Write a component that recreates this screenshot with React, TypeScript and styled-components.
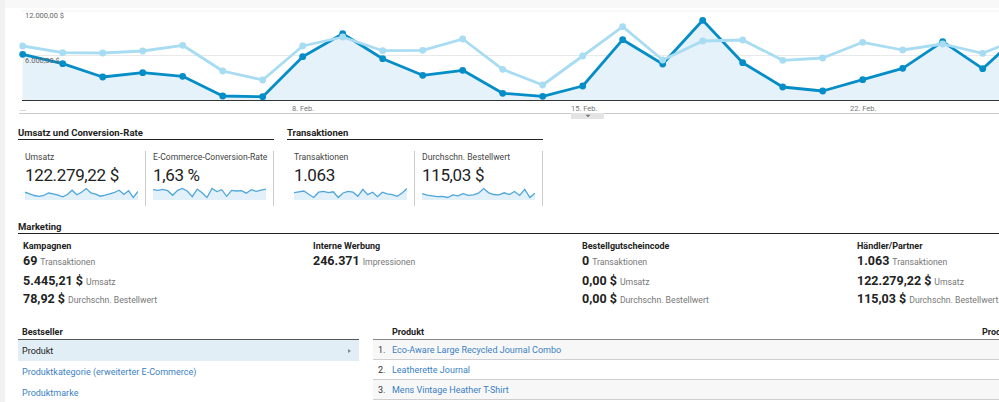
import React from "react";
import styled, { createGlobalStyle } from "styled-components";

const GlobalStyle = createGlobalStyle`
  html, body {
    margin: 0;
    padding: 0;
    background: #fff;
    overflow: hidden;
  }
  body {
    font-family: Roboto, "Noto Sans", Arial, sans-serif;
    color: #222;
  }
`;

const Page = styled.div`
  display: flex;
  width: 999px;
  height: 402px;
  overflow: hidden;
`;

const SideStrip = styled.div`
  width: 5px;
  flex: none;
  background: #f1f1f1;
`;

const Main = styled.div`
  flex: 1;
  min-width: 0;
`;

const TopBand = styled.div`
  height: 8px;
  background: #f8f8f8;
`;

const ChartSvg = styled.svg`
  display: block;
  width: 994px;
  height: 111px;
`;

const Section = styled.section<{ $top: number }>`
  padding-left: 13px;
  margin-top: ${(p) => p.$top}px;
`;

const KpiGroups = styled.div`
  display: flex;
  gap: 13px;
`;

const KpiGroup = styled.div`
  width: 256px;
`;

const GroupTitle = styled.div`
  font-size: 9.5px;
  font-weight: 700;
  line-height: 12px;
  color: #222;
  border-bottom: 1px solid #222;
`;

const Cards = styled.div`
  display: flex;
  margin-top: 11px;
`;

const Card = styled.div`
  width: 128px;
  height: 55px;
  box-sizing: border-box;
  padding: 0 0 6px 7px;
  border-right: 1px solid #ccc;
`;

const CardLabel = styled.div`
  font-size: 8.6px;
  line-height: 13px;
  color: #444;
  white-space: nowrap;
`;

const CardValue = styled.div`
  font-size: 17px;
  line-height: 23px;
  letter-spacing: -0.35px;
  color: #222;
  white-space: nowrap;
`;

const MarketingGrid = styled.div`
  display: grid;
  grid-template-columns: 290px 269px 275px 1fr;
  padding: 6px 0 0 5px;
`;

const MarketingCol = styled.div`
  display: flex;
  flex-direction: column;
`;

const MarketingTitle = styled.div`
  font-size: 9px;
  font-weight: 700;
  line-height: 12px;
  color: #222;
`;

const MarketingLine = styled.div<{ $gap: number }>`
  margin-top: ${(p) => p.$gap}px;
  height: 15px;
  line-height: 15px;
  white-space: nowrap;
`;

const BigNum = styled.span`
  font-size: 12.5px;
  font-weight: 700;
  line-height: 15px;
  color: #222;
`;

const SmallUnit = styled.span`
  font-size: 8.7px;
  line-height: 15px;
  color: #777;
  margin-left: 3px;
`;

const TablesRow = styled.div`
  display: flex;
  gap: 14px;
  margin-top: 21px;
`;

const SideTable = styled.div`
  width: 341px;
  flex: none;
`;

const TableHead = styled.div<{ $border: string; $pad: number }>`
  display: flex;
  font-size: 9px;
  font-weight: 700;
  line-height: 13px;
  color: #222;
  padding-left: ${(p) => p.$pad}px;
  border-bottom: 1px solid ${(p) => p.$border};
`;

const SideRow = styled.div<{ $active?: boolean }>`
  display: flex;
  align-items: center;
  justify-content: space-between;
  height: 21px;
  padding: 0 8px 0 4px;
  font-size: 9px;
  background: ${(p) => (p.$active ? "#e1eef6" : "transparent")};
  color: ${(p) => (p.$active ? "#222" : "#3a81c3")};
`;

const RowArrow = styled.span`
  width: 0;
  height: 0;
  border-top: 2.5px solid transparent;
  border-bottom: 2.5px solid transparent;
  border-left: 3px solid #888;
`;

const DataTable = styled.div`
  width: 720px;
  flex: none;
`;

const HeadCell = styled.div<{ $w?: number }>`
  width: ${(p) => (p.$w ? `${p.$w}px` : "auto")};
  flex: ${(p) => (p.$w ? "none" : "1")};
  white-space: nowrap;
`;

const DataRow = styled.div<{ $striped: boolean }>`
  display: flex;
  align-items: center;
  height: 19px;
  border-bottom: 1px solid #cfcfcf;
  background: ${(p) => (p.$striped ? "#f7f7f7" : "#fff")};
  font-size: 9px;
`;

const RowIndex = styled.span`
  width: 14px;
  padding-left: 5px;
  color: #333;
`;

const RowLink = styled.span`
  color: #3a81c3;
`;

const X0 = 22.7;
const STEP = 40;

const revenue = [
  54.3, 63.7, 77, 72.7, 76.3, 96, 96.7, 56.7, 33.7, 58.7, 75.3, 70.3, 93.3,
  96.3, 86, 39.7, 64, 20.3, 62.7, 87, 91, 79.7, 68.3, 41.7, 68.7, 32,
];

const conversion = [
  46, 52.7, 53, 51, 45.3, 71, 80, 46, 37, 50.7, 50.3, 39, 69.3, 85, 56, 26.7,
  60, 41, 40, 60.3, 58, 42.3, 50, 44, 53.3, 37.5,
];

const toPoints = (vals: number[]) =>
  vals.map((y, i) => `${(X0 + i * STEP).toFixed(1)},${y}`).join(" ");

function TrendChart() {
  const lastX = X0 + (revenue.length - 1) * STEP;
  const area = `M${X0},100 L${toPoints(revenue)} L${lastX},100 Z`;
  const axisLabels = [
    { x: 20, t: "..." },
    { x: 292, t: "8. Feb." },
    { x: 571, t: "15. Feb." },
    { x: 850, t: "22. Feb." },
  ];

  return (
    <ChartSvg viewBox="5 8 994 111">
      <line x1="22" y1="11" x2="999" y2="11" stroke="#f0f0f0" />
      <line x1="22" y1="55.5" x2="999" y2="55.5" stroke="#e9e9e9" />
      <path d={area} fill="#e6f2f9" />
      <polyline
        points={toPoints(revenue)}
        fill="none"
        stroke="#058dc7"
        strokeWidth="2.8"
        strokeLinejoin="round"
      />
      {revenue.map((y, i) => (
        <circle key={`r${i}`} cx={X0 + i * STEP} cy={y} r="3.4" fill="#058dc7" />
      ))}
      <polyline
        points={toPoints(conversion)}
        fill="none"
        stroke="#a8dcf2"
        strokeWidth="2.8"
        strokeLinejoin="round"
      />
      {conversion.map((y, i) => (
        <circle key={`c${i}`} cx={X0 + i * STEP} cy={y} r="3.4" fill="#a8dcf2" />
      ))}
      <line x1="22" y1="100.5" x2="999" y2="100.5" stroke="#333" />
      <text x="25" y="18" fontSize="7.5" fill="#666" fontFamily="Roboto, sans-serif">
        12.000,00 $
      </text>
      <text x="25" y="63" fontSize="7.5" fill="#666" fontFamily="Roboto, sans-serif">
        6.000,00 $
      </text>
      {axisLabels.map((l) => (
        <text
          key={l.t}
          x={l.x}
          y="110.5"
          fontSize="7.5"
          fill="#777"
          fontFamily="Roboto, sans-serif"
        >
          {l.t}
        </text>
      ))}
      <line x1="19" y1="113.5" x2="999" y2="113.5" stroke="#cccccc" />
      <rect x="571" y="113" width="33" height="6" fill="#e4e4e4" />
      <path d="M585.5,114.8 L590.5,114.8 L588,117.2 Z" fill="#777" />
    </ChartSvg>
  );
}

function Sparkline({ values }: { values: number[] }) {
  const w = 113;
  const h = 13;
  const min = Math.min(...values);
  const max = Math.max(...values);
  const pts = values.map((v, i) => {
    const x = (i / (values.length - 1)) * w;
    const y = 1.5 + (1 - (v - min) / (max - min)) * (h - 4);
    return `${x.toFixed(1)},${y.toFixed(1)}`;
  });
  return (
    <svg width={w} height={h} viewBox={`0 0 ${w} ${h}`} style={{ display: "block" }}>
      <path d={`M0,${h} L${pts.join(" L")} L${w},${h} Z`} fill="#e2f0f9" />
      <polyline points={pts.join(" ")} fill="none" stroke="#4fa6da" strokeWidth="1.3" />
    </svg>
  );
}

const sparkRevenue = [
  6, 5, 4, 3.5, 4, 5.5, 5, 4.2, 3.2, 4.6, 7.2, 4.5, 6, 8.2, 5.5, 4.8, 3.6, 4.2, 5,
  5.8, 7.2, 4.6, 6.8, 2.8, 6.4,
];
const sparkRate = [
  6.4, 6.2, 6.5, 6.1, 4.6, 6.2, 6.8, 5.9, 4.2, 6.6, 5.4, 3.9, 6.8, 5.8, 6.4, 4.3,
  6.2, 6, 6.1, 5.3, 6.4, 5.9, 6.3, 6.6,
];
const sparkTx = [
  6, 6.4, 6.8, 5.2, 3.6, 6.2, 6.6, 6, 6.4, 3.6, 5.8, 6.6, 6.2, 4.2, 7.6, 5, 6.2,
  4, 6.2, 5.4, 5, 4.2, 5.8, 8,
];
const sparkAov = [
  5.2, 4.5, 4.2, 3.8, 3.9, 3.4, 4.6, 4.2, 5.2, 4.4, 4.6, 5.4, 7.6, 5.6, 4.8,
  4.6, 5.6, 4.8, 6.2, 4.4, 7.2, 3.4, 5.4,
];

const kpiGroups = [
  {
    title: "Umsatz und Conversion-Rate",
    cards: [
      { label: "Umsatz", value: "122.279,22 $", spark: sparkRevenue },
      { label: "E-Commerce-Conversion-Rate", value: "1,63 %", spark: sparkRate },
    ],
  },
  {
    title: "Transaktionen",
    cards: [
      { label: "Transaktionen", value: "1.063", spark: sparkTx },
      { label: "Durchschn. Bestellwert", value: "115,03 $", spark: sparkAov },
    ],
  },
];

const marketing = [
  {
    title: "Kampagnen",
    lines: [
      ["69", "Transaktionen"],
      ["5.445,21 $", "Umsatz"],
      ["78,92 $", "Durchschn. Bestellwert"],
    ],
  },
  { title: "Interne Werbung", lines: [["246.371", "Impressionen"]] },
  {
    title: "Bestellgutscheincode",
    lines: [
      ["0", "Transaktionen"],
      ["0,00 $", "Umsatz"],
      ["0,00 $", "Durchschn. Bestellwert"],
    ],
  },
  {
    title: "Händler/Partner",
    lines: [
      ["1.063", "Transaktionen"],
      ["122.279,22 $", "Umsatz"],
      ["115,03 $", "Durchschn. Bestellwert"],
    ],
  },
];

const lineGaps = [0, 5, 3];

const sideItems = ["Produkt", "Produktkategorie (erweiterter E-Commerce)", "Produktmarke"];

const products = [
  "Eco-Aware Large Recycled Journal Combo",
  "Leatherette Journal",
  "Mens Vintage Heather T-Shirt",
];

export default function App() {
  return (
    <>
      <GlobalStyle />
      <Page>
        <SideStrip />
        <Main>
          <TopBand />
          <TrendChart />

          <Section $top={8}>
            <KpiGroups>
              {kpiGroups.map((g) => (
                <KpiGroup key={g.title}>
                  <GroupTitle>{g.title}</GroupTitle>
                  <Cards>
                    {g.cards.map((c) => (
                      <Card key={c.label}>
                        <CardLabel>{c.label}</CardLabel>
                        <CardValue>{c.value}</CardValue>
                        <Sparkline values={c.spark} />
                      </Card>
                    ))}
                  </Cards>
                </KpiGroup>
              ))}
            </KpiGroups>
          </Section>

          <Section $top={15}>
            <GroupTitle>Marketing</GroupTitle>
            <MarketingGrid>
              {marketing.map((m) => (
                <MarketingCol key={m.title}>
                  <MarketingTitle>{m.title}</MarketingTitle>
                  {m.lines.map(([num, unit], i) => (
                    <MarketingLine key={unit} $gap={lineGaps[i]}>
                      <BigNum>{num}</BigNum>
                      <SmallUnit>{unit}</SmallUnit>
                    </MarketingLine>
                  ))}
                </MarketingCol>
              ))}
            </MarketingGrid>
          </Section>

          <Section $top={0}>
            <TablesRow>
              <SideTable>
                <TableHead $border="#555" $pad={4}>
                  Bestseller
                </TableHead>
                {sideItems.map((item, i) => (
                  <SideRow key={item} $active={i === 0}>
                    {item}
                    {i === 0 && <RowArrow />}
                  </SideRow>
                ))}
              </SideTable>
              <DataTable>
                <TableHead $border="#888" $pad={19}>
                  <HeadCell $w={590}>Produkt</HeadCell>
                  <HeadCell>Produktumsatz</HeadCell>
                </TableHead>
                {products.map((p, i) => (
                  <DataRow key={p} $striped={i % 2 === 0}>
                    <RowIndex>{i + 1}.</RowIndex>
                    <RowLink>{p}</RowLink>
                  </DataRow>
                ))}
              </DataTable>
            </TablesRow>
          </Section>
        </Main>
      </Page>
    </>
  );
}
